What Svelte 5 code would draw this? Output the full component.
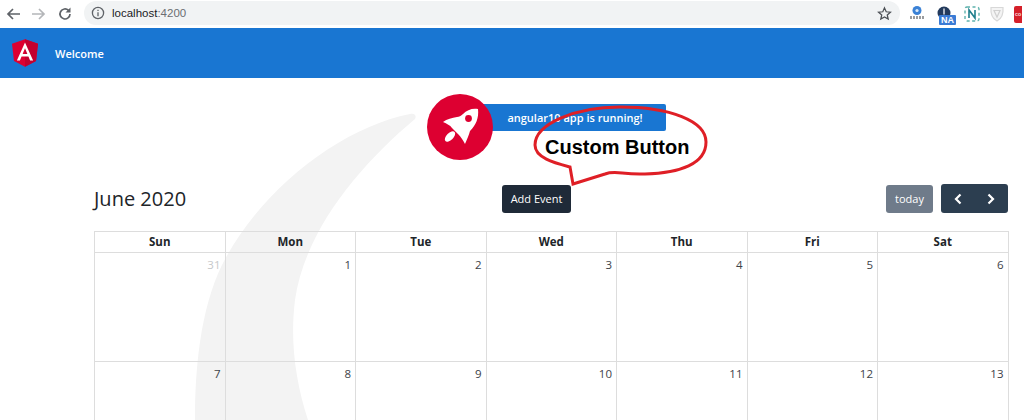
<script>
  const days = ['Sun', 'Mon', 'Tue', 'Wed', 'Thu', 'Fri', 'Sat'];
  const weeks = [
    [31, 1, 2, 3, 4, 5, 6],
    [7, 8, 9, 10, 11, 12, 13]
  ];
</script>

<div class="page">
  <div class="chrome">
    <div class="nav-icons">
      <svg width="16" height="16" viewBox="0 0 16 16" class="ic"><path d="M15 8H3M8 3 3 8l5 5" fill="none" stroke="#5f6368" stroke-width="1.7"/></svg>
      <svg width="16" height="16" viewBox="0 0 16 16" class="ic"><path d="M1 8h12M8 3l5 5-5 5" fill="none" stroke="#b4b6b9" stroke-width="1.7"/></svg>
      <svg width="16" height="16" viewBox="0 0 16 16" class="ic"><path d="M13 8a5 5 0 1 1-1.5-3.6" fill="none" stroke="#5f6368" stroke-width="1.7"/><path d="M13.5 1.5v5h-5z" fill="#5f6368"/></svg>
    </div>
    <div class="omnibox">
      <svg width="14" height="14" viewBox="0 0 14 14"><circle cx="7" cy="7" r="5.6" fill="none" stroke="#5f6368" stroke-width="1.3"/><path d="M7 6.2v4M7 3.700v1.300" stroke="#5f6368" stroke-width="1.3"/></svg>
      <span class="url">localhost<span class="port">:4200</span></span>
      <svg class="star" width="15" height="15" viewBox="0 0 24 24"><path d="m12 3 2.700 6.200 6.800.6-5.100 4.500 1.500 6.600L12 17.400 6.100 20.900l1.500-6.600-5.100-4.500 6.800-.6z" fill="none" stroke="#4b4f54" stroke-width="2"/></svg>
    </div>
    <div class="exts">
      <svg width="20" height="20" viewBox="0 0 20 20"><circle cx="10" cy="6.500" r="4.500" fill="#3b82d6"/><circle cx="10" cy="6.500" r="1.600" fill="#dce9f8"/><path d="M3 13.500h14" stroke="#9a9c9f" stroke-width="3" stroke-dasharray="2 1"/></svg>
      <div class="ext-na">
        <svg width="16" height="14" viewBox="0 0 16 14"><circle cx="7" cy="7" r="6.500" fill="#233a5c"/><path d="M7 2.500v6" stroke="#d9dee6" stroke-width="1.500"/></svg>
        <span class="na">NA</span>
      </div>
      <svg width="18" height="18" viewBox="0 0 18 18"><rect x="2" y="2" width="14" height="14" rx="2" fill="none" stroke="#5fb3ad" stroke-width="1.400" stroke-dasharray="3 2.500"/><path d="M6 13V5l6 8V5" fill="none" stroke="#1f7f8c" stroke-width="1.600"/></svg>
      <svg width="16" height="18" viewBox="0 0 16 18"><path d="M2 2.500h12c.5 6-1 11-6 13.500-5-2.500-6.500-7.500-6-13.500z" fill="#f4f4f4" stroke="#d8d8d8" stroke-width="1.200"/><path d="M5 5.500h6L8 12z" fill="none" stroke="#d0d0d0" stroke-width="1.200"/></svg>
      <div class="ext-red">CO</div>
    </div>
  </div>

  <header class="toolbar">
    <svg width="26" height="28" viewBox="0 0 250 264">
      <path d="M125 0 0 44l19 165 106 55 106-55 19-165z" fill="#dd0031"/>
      <path d="M125 0v264l106-55 19-165z" fill="#c3002f"/>
      <path d="M125 31 47 205h29l16-39h66l16 39h29zm23 111h-46l23-55z" fill="#fff"/>
    </svg>
    <span class="welcome">Welcome</span>
  </header>

  <main class="main">
    <svg class="swoosh" width="500" height="342" viewBox="0 0 500 342">
      <path d="M410 36C340 50 260 112 222 187 200 232 195 292 195 342H308C295 302 290 262 295 222 305 152 360 87 415 41 417 37 414 35 410 36Z" fill="#f3f3f3"/>
    </svg>

    <div class="hero">
      <div class="rocket">
        <svg width="70" height="70" viewBox="0 0 70 70">
          <circle cx="35" cy="35" r="33" fill="#dd0031"/>
          <path d="M53 17C47 16 42 18 38 22 36 24 34 25 32 25 27 26 22 27 18 30 22 32 25 33 27 36L33 42C36 45 38 48 40 52 42 47 44 43 45 39 51 33 54 26 53 17Z" fill="#fff"/>
          <circle cx="43.500" cy="26.500" r="3.400" fill="#dd0031"/>
          <ellipse cx="25" cy="44.500" rx="6.500" ry="3.400" transform="rotate(-45 25 44.500)" fill="#fff"/>
        </svg>
      </div>
      <div class="running">angular10 app is running!</div>
    </div>

    <section class="calendar">
      <div class="cal-bar">
        <h2>June 2020</h2>
        <button class="btn add">Add Event</button>
        <div class="right">
          <button class="btn today">today</button>
          <div class="group">
            <button class="chev" aria-label="Previous"><svg width="10" height="12" viewBox="0 0 10 12"><path d="M7.500 1.500 3 6l4.500 4.500" fill="none" stroke="#fff" stroke-width="2.200"/></svg></button>
            <button class="chev" aria-label="Next"><svg width="10" height="12" viewBox="0 0 10 12"><path d="M2.500 1.500 7 6l-4.500 4.500" fill="none" stroke="#fff" stroke-width="2.200"/></svg></button>
          </div>
        </div>
      </div>

      <div class="grid">
        {#each days as d}
          <div class="head">{d}</div>
        {/each}
        {#each weeks as w}
          {#each w as n}
            <div class="cell" class:other={n === 31}>{n}</div>
          {/each}
        {/each}
      </div>
    </section>

    <div class="callout">
      <svg width="180" height="84" viewBox="0 0 180 84">
        <path d="M75 70C86 66 92 71 115 70 150 69 176 60 176 38 176 17 140 3 90 3 45 3 5 20 5 41 5 54 25 59 40 63L43 80Z" fill="none" stroke="#df1f26" stroke-width="3"/>
      </svg>
      <span class="callout-text">Custom Button</span>
    </div>
  </main>
</div>

<style>
  :global(body) {
    margin: 0;
    background: #fff;
    overflow: hidden;
  }
  .page {
    width: 1024px;
    height: 420px;
    overflow: hidden;
    font-family: "Open Sans", "Noto Sans", sans-serif;
    color: #212529;
  }
  .chrome {
    height: 28px;
    display: flex;
    align-items: center;
    background: #fff;
  }
  .nav-icons {
    display: flex;
    gap: 10px;
    padding-left: 5px;
    width: 84px;
    box-sizing: border-box;
    flex: none;
  }
  .ic { flex: none; }
  .omnibox {
    width: 816px;
    height: 24px;
    margin-top: -2px;
    background: #f1f3f4;
    border-radius: 12px;
    display: flex;
    align-items: center;
    padding: 0 8px 0 7px;
    box-sizing: border-box;
    gap: 7px;
    flex: none;
  }
  .url {
    font: 11.5px "Liberation Sans", sans-serif;
    color: #202124;
  }
  .port { color: #6b6e72; }
  .star { margin-left: auto; }
  .exts {
    display: flex;
    align-items: center;
    gap: 8px;
    padding-left: 7px;
  }
  .ext-na {
    position: relative;
    width: 18px;
    height: 22px;
    margin-left: 2px;
  }
  .na {
    position: absolute;
    right: -1px;
    bottom: 0;
    background: #3a7bd5;
    color: #fff;
    font: bold 9px/10px "Liberation Sans", sans-serif;
    padding: 0 2px;
    border-radius: 1px;
  }
  .ext-red {
    width: 8px;
    height: 17px;
    background: #d5202a;
    border-radius: 2px 0 0 2px;
    margin-left: 1px;
    color: #fff;
    font: bold 4px/17px "Liberation Sans", sans-serif;
    white-space: nowrap;
    text-align: center;
  }
  .toolbar {
    height: 50px;
    background: #1976d2;
    display: flex;
    align-items: center;
    padding-left: 12px;
    box-sizing: border-box;
  }
  .welcome {
    margin-left: 17px;
    color: #fff;
    font-size: 11px;
    font-weight: 600;
  }
  .main {
    position: relative;
    height: 342px;
  }
  .swoosh {
    position: absolute;
    left: 0;
    top: 0;
    pointer-events: none;
  }
  .hero {
    position: relative;
    display: flex;
    align-items: flex-start;
    padding: 14px 0 0 425px;
    height: 70px;
  }
  .rocket {
    width: 70px;
    height: 70px;
    position: relative;
    z-index: 1;
  }
  .running {
    width: 196px;
    margin: 12px 0 0 -25px;
    height: 27px;
    padding-left: 25px;
    padding-right: 11px;
    box-sizing: border-box;
    background: #1976d2;
    border-radius: 2px;
    color: #fff;
    font-size: 11px;
    font-weight: 600;
    line-height: 27px;
    text-align: center;
    white-space: nowrap;
  }
  .calendar {
    position: relative;
    margin: 22px 16px 0 94px;
  }
  .cal-bar {
    display: flex;
    align-items: center;
    height: 29px;
    margin-bottom: 18px;
    width: 914px;
  }
  h2 {
    margin: 0;
    width: 408px;
    font-size: 20px;
    font-weight: 400;
    line-height: 29px;
    color: #212529;
  }
  .btn {
    border: 0;
    border-radius: 3px;
    color: #fff;
    font: 400 11px "Open Sans", sans-serif;
    height: 28px;
    padding: 0;
  }
  .add {
    width: 69px;
    background: #1f2a38;
  }
  .right {
    margin-left: auto;
    display: flex;
    gap: 8px;
    align-items: center;
  }
  .today {
    width: 47px;
    background: #6f7b8a;
  }
  .group {
    display: flex;
    width: 67px;
    height: 29px;
    background: #2c3e50;
    border-radius: 3px;
  }
  .chev {
    flex: 1;
    background: transparent;
    border: 0;
    padding: 0;
    display: flex;
    align-items: center;
    justify-content: center;
  }
  .grid {
    display: grid;
    grid-template-columns: repeat(7, 1fr);
    grid-template-rows: 21px 109px 109px;
    border-top: 1px solid #ddd;
    border-left: 1px solid #ddd;
    width: 914.500px;
    box-sizing: border-box;
  }
  .head {
    border-right: 1px solid #ddd;
    border-bottom: 1px solid #ddd;
    text-align: center;
    font-size: 11.500px;
    font-weight: 700;
    line-height: 20px;
    box-sizing: border-box;
  }
  .cell {
    border-right: 1px solid #ddd;
    border-bottom: 1px solid #ddd;
    text-align: right;
    padding: 4px 4px 0 0;
    font-size: 11.500px;
    line-height: 16px;
    color: #3d4248;
  }
  .cell.other { color: #c6c8ca; }
  .callout {
    position: absolute;
    left: 530px;
    top: 26px;
    width: 180px;
    height: 84px;
    pointer-events: none;
  }
  .callout svg { display: block; }
  .callout-text {
    position: absolute;
    left: 15px;
    top: 30px;
    font: bold 20px/26px "Liberation Sans", sans-serif;
    color: #000;
    white-space: nowrap;
  }
</style>
